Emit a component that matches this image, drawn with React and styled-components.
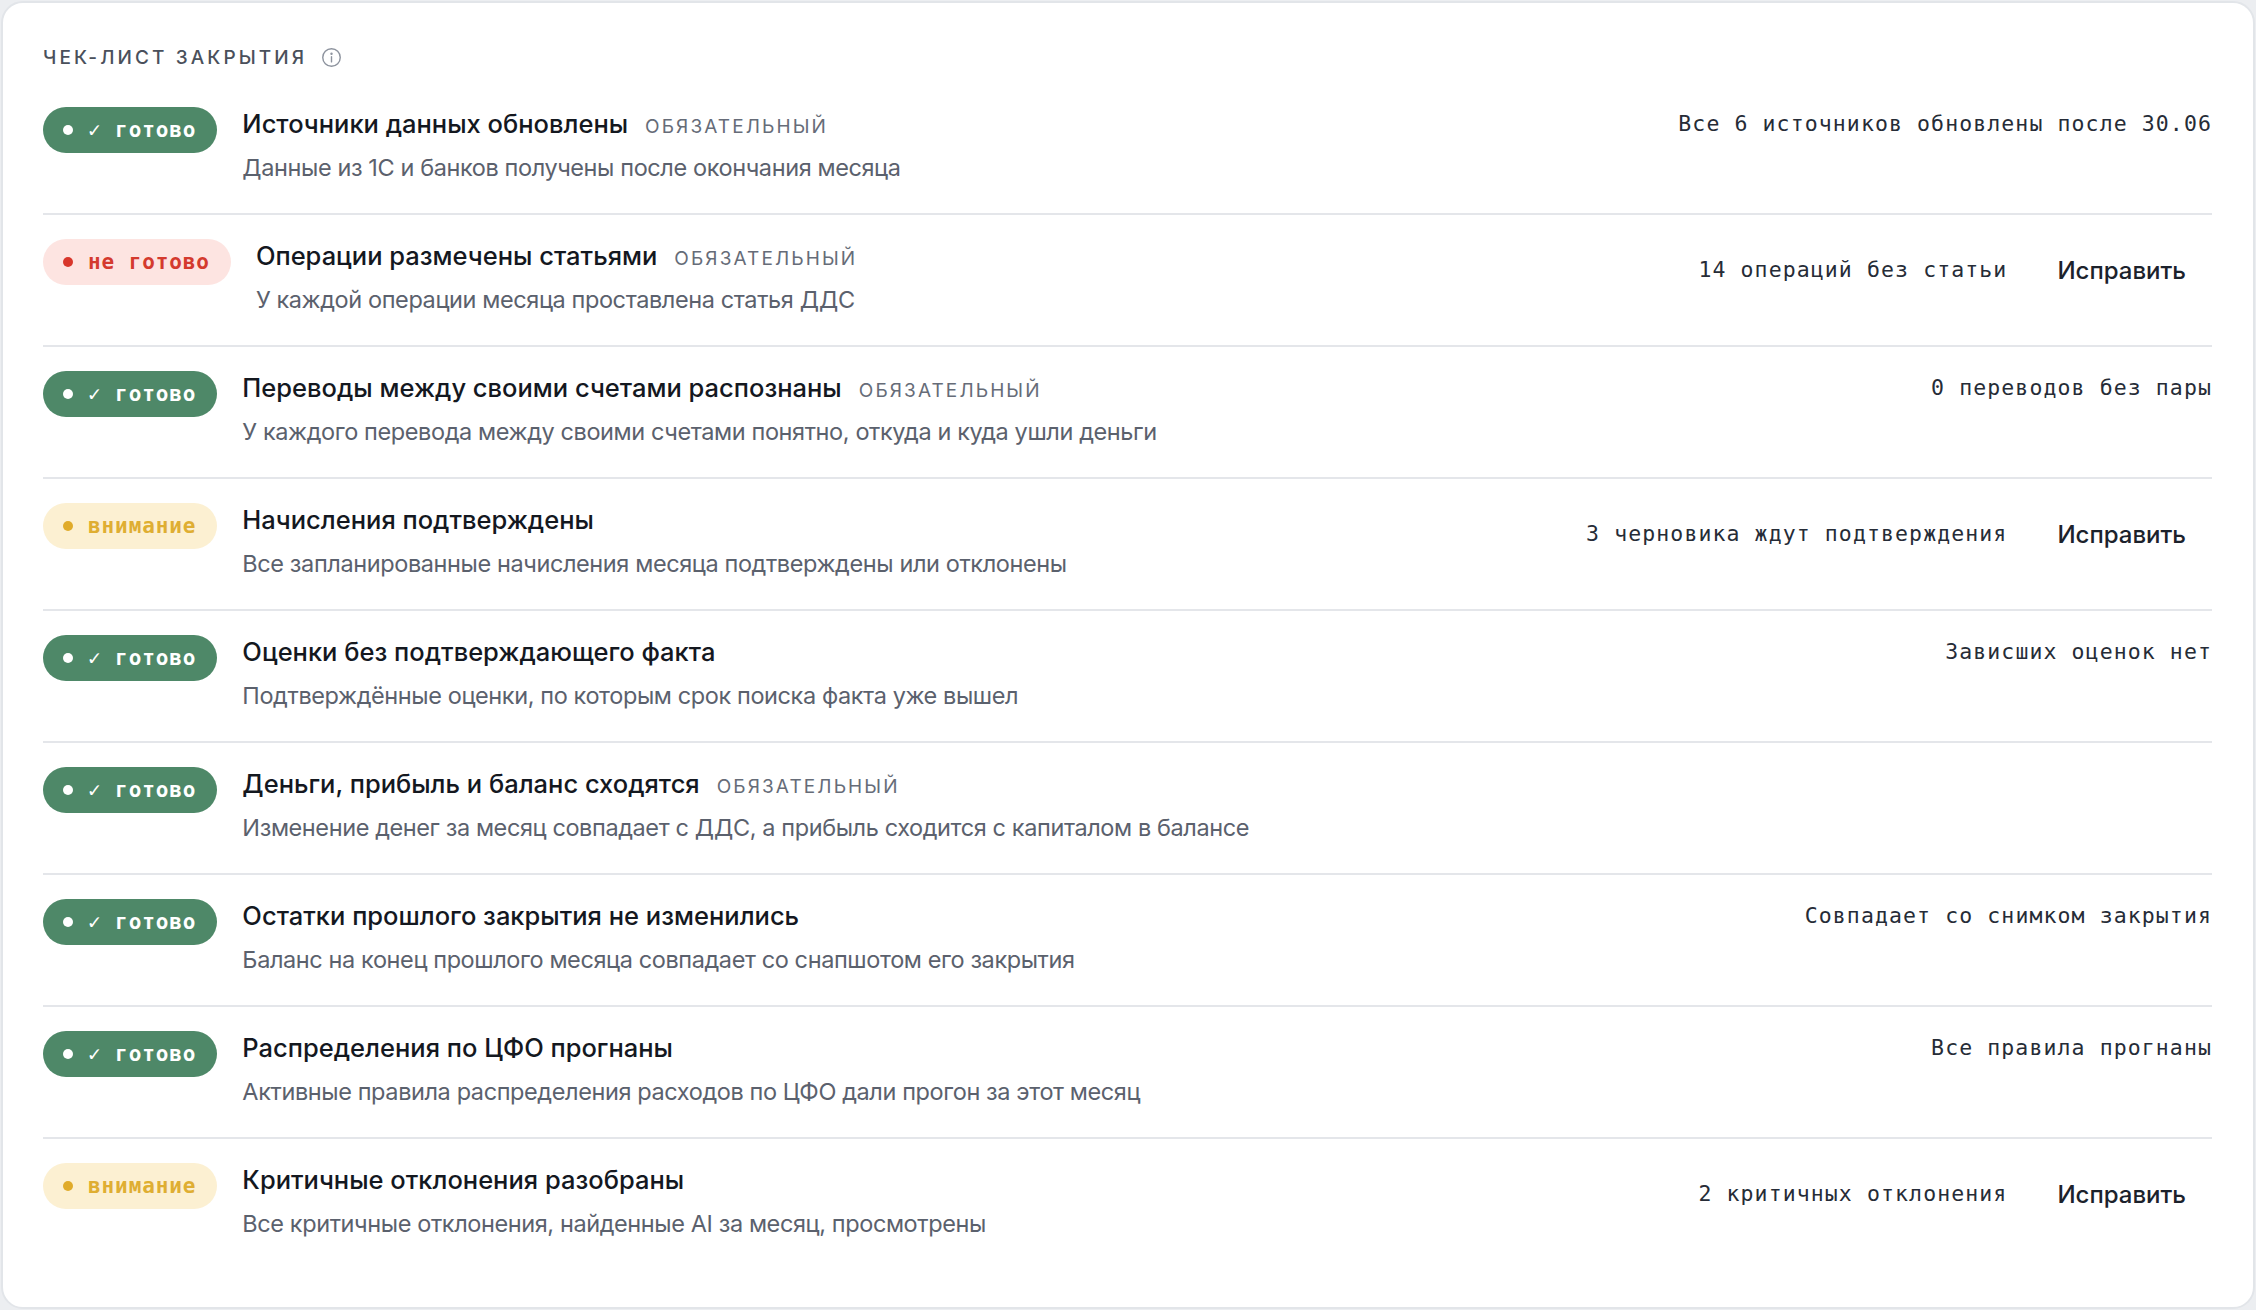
import React from "react";
import styled, { createGlobalStyle, css } from "styled-components";

const GlobalStyle = createGlobalStyle`
  html, body {
    margin: 0;
    padding: 0;
    background: #eceef1;
  }
  body {
    font-family: Inter, "Noto Sans", sans-serif;
    -webkit-font-smoothing: antialiased;
  }
`;

const MONO = `"DejaVu Sans Mono", "Liberation Mono", monospace`;

const Page = styled.div`
  padding: 1px;
`;

const Card = styled.section`
  background: #ffffff;
  border: 2px solid #e2e5e9;
  border-radius: 22px;
  padding: 42px 41px 38px 40px;
  min-height: calc(100vh - 6px);
  box-sizing: border-box;
`;

const Header = styled.div`
  display: flex;
  align-items: center;
  gap: 14px;
  height: 24px;
  margin-bottom: 14px;
`;

const HeaderTitle = styled.h2`
  margin: 0;
  font-size: 19px;
  font-weight: 500;
  letter-spacing: 3.1px;
  text-transform: uppercase;
  color: #4a505b;
`;

const InfoIcon = styled.svg`
  width: 21px;
  height: 21px;
  color: #8d939e;
`;

const List = styled.ul`
  list-style: none;
  margin: 0;
  padding: 0;
`;

const Row = styled.li`
  display: flex;
  align-items: flex-start;
  gap: 25px;
  padding: 24px 0 30px;
  & + & {
    border-top: 2px solid #e4e6ea;
  }
`;

const tones = {
  done: css`
    background: #4e8868;
    color: #ffffff;
    --dot: #ffffff;
  `,
  fail: css`
    background: #fde4e1;
    color: #d43a2e;
    --dot: #d8362b;
  `,
  warn: css`
    background: #fcf0d2;
    color: #dfae32;
    --dot: #e0ab2a;
  `,
};

const Badge = styled.span`
  flex: none;
  display: inline-flex;
  align-items: center;
  gap: 15px;
  height: 46px;
  padding: 0 21px 0 20px;
  border-radius: 23px;
  font-family: ${MONO};
  font-size: 21px;
  font-weight: 700;
  letter-spacing: 0.9px;
  white-space: pre;
  ${(p) => tones[p.$tone]}

  &::before {
    content: "";
    width: 10px;
    height: 10px;
    border-radius: 50%;
    background: var(--dot);
  }
`;

const Body = styled.div`
  flex: 1;
  min-width: 0;
`;

const TitleLine = styled.div`
  display: flex;
  align-items: baseline;
  gap: 17px;
  height: 34px;
  line-height: 34px;
`;

const Title = styled.span`
  font-size: 25.5px;
  font-weight: 500;
  color: #14181f;
`;

const Tag = styled.span`
  font-size: 19px;
  font-weight: 400;
  letter-spacing: 2.1px;
  text-transform: uppercase;
  color: #666c78;
`;

const Description = styled.p`
  margin: 12px 0 0;
  font-size: 23.5px;
  line-height: 30px;
  letter-spacing: -0.4px;
  color: #5b616d;
`;

const Side = styled.div`
  flex: none;
  display: flex;
  align-items: center;
  gap: 24px;
  min-height: 34px;
`;

const Meta = styled.span`
  font-family: ${MONO};
  font-size: 21.5px;
  letter-spacing: 1.1px;
  color: #262c37;
  line-height: 34px;
`;

const FixButton = styled.button`
  height: 62px;
  padding: 0 26px;
  border: none;
  border-radius: 12px;
  background: transparent;
  font-family: Inter, "Noto Sans", sans-serif;
  font-size: 24px;
  font-weight: 500;
  color: #1c222c;
  cursor: pointer;
  &:hover {
    background: #f2f4f7;
  }
`;

const checks = [
  {
    status: "done",
    title: "Источники данных обновлены",
    required: true,
    text: "Данные из 1С и банков получены после окончания месяца",
    meta: "Все 6 источников обновлены после 30.06",
  },
  {
    status: "fail",
    title: "Операции размечены статьями",
    required: true,
    text: "У каждой операции месяца проставлена статья ДДС",
    meta: "14 операций без статьи",
    fix: true,
  },
  {
    status: "done",
    title: "Переводы между своими счетами распознаны",
    required: true,
    text: "У каждого перевода между своими счетами понятно, откуда и куда ушли деньги",
    meta: "0 переводов без пары",
  },
  {
    status: "warn",
    title: "Начисления подтверждены",
    text: "Все запланированные начисления месяца подтверждены или отклонены",
    meta: "3 черновика ждут подтверждения",
    fix: true,
  },
  {
    status: "done",
    title: "Оценки без подтверждающего факта",
    text: "Подтверждённые оценки, по которым срок поиска факта уже вышел",
    meta: "Зависших оценок нет",
  },
  {
    status: "done",
    title: "Деньги, прибыль и баланс сходятся",
    required: true,
    text: "Изменение денег за месяц совпадает с ДДС, а прибыль сходится с капиталом в балансе",
  },
  {
    status: "done",
    title: "Остатки прошлого закрытия не изменились",
    text: "Баланс на конец прошлого месяца совпадает со снапшотом его закрытия",
    meta: "Совпадает со снимком закрытия",
  },
  {
    status: "done",
    title: "Распределения по ЦФО прогнаны",
    text: "Активные правила распределения расходов по ЦФО дали прогон за этот месяц",
    meta: "Все правила прогнаны",
  },
  {
    status: "warn",
    title: "Критичные отклонения разобраны",
    text: "Все критичные отклонения, найденные AI за месяц, просмотрены",
    meta: "2 критичных отклонения",
    fix: true,
  },
];

const labels = {
  done: "✓ готово",
  fail: "не готово",
  warn: "внимание",
};

function CheckRow({ item }) {
  return (
    <Row>
      <Badge $tone={item.status}>{labels[item.status]}</Badge>
      <Body>
        <TitleLine>
          <Title>{item.title}</Title>
          {item.required && <Tag>Обязательный</Tag>}
        </TitleLine>
        <Description>{item.text}</Description>
      </Body>
      {(item.meta || item.fix) && (
        <Side>
          {item.meta && <Meta>{item.meta}</Meta>}
          {item.fix && <FixButton type="button">Исправить</FixButton>}
        </Side>
      )}
    </Row>
  );
}

export default function App() {
  return (
    <Page>
      <GlobalStyle />
      <Card>
        <Header>
          <HeaderTitle>Чек-лист закрытия</HeaderTitle>
          <InfoIcon viewBox="0 0 24 24" fill="none" stroke="currentColor" strokeWidth="1.6" strokeLinecap="round">
            <circle cx="12" cy="12" r="10" />
            <line x1="12" y1="11" x2="12" y2="17" />
            <circle cx="12" cy="7.6" r="0.6" fill="currentColor" />
          </InfoIcon>
        </Header>
        <List>
          {checks.map((item) => (
            <CheckRow key={item.title} item={item} />
          ))}
        </List>
      </Card>
    </Page>
  );
}
